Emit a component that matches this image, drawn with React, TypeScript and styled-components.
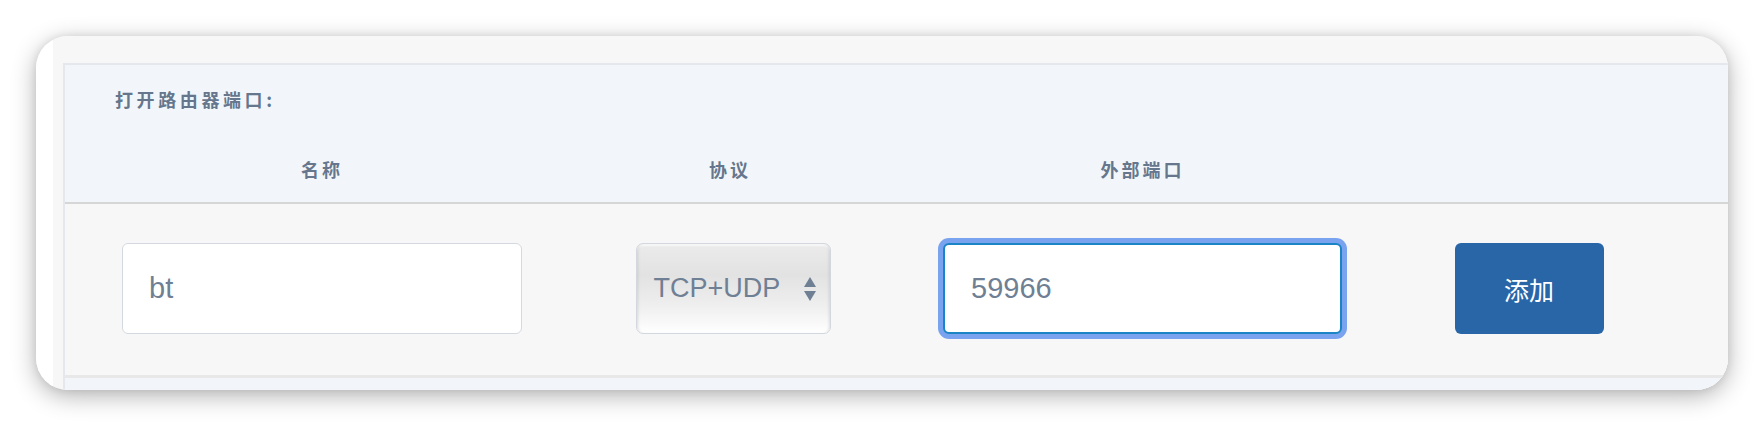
import React, { useState } from 'react';
import styled, { createGlobalStyle } from 'styled-components';

const GlobalStyle = createGlobalStyle`
  html, body {
    margin: 0;
    padding: 0;
    background: #ffffff;
  }
  body {
    font-family: "Liberation Sans", "Noto Sans CJK SC", Arial, sans-serif;
  }
`;

const Page = styled.div`
  width: 1764px;
  height: 426px;
  padding: 36px 36px 0 36px;
  box-sizing: border-box;
  overflow: hidden;
`;

const Card = styled.div`
  width: 1692px;
  height: 354px;
  border-radius: 32px;
  overflow: hidden;
  display: flex;
  background: #f7f7f7;
  box-shadow: 0 6px 24px rgba(0, 0, 0, 0.3), 0 0 8px rgba(0, 0, 0, 0.08);
`;

const SideStrip = styled.div`
  width: 17px;
  flex: none;
  background: #ffffff;
`;

const Content = styled.div`
  flex: 1;
  padding: 27px 0 0 10px;
  background: #f7f7f7;
  display: flex;
  flex-direction: column;
`;

const Panel = styled.div`
  flex: 1;
  background: #f2f6fa;
  border-top: 2px solid #e4e8ec;
  border-left: 2px solid #e4e8ec;
  display: flex;
  flex-direction: column;
`;

const Title = styled.div`
  padding: 22px 0 24px 50px;
  line-height: 24px;
  font-size: 18px;
  font-weight: 700;
  letter-spacing: 3.6px;
  color: #66768c;
  font-family: "Noto Sans CJK SC", "Liberation Sans", sans-serif;
`;

const Grid = styled.div`
  display: grid;
  grid-template-columns: 514px 302px 523px 250px 1fr;
`;

const HeadRow = styled(Grid)`
  height: 67px;
  border-bottom: 2px solid #d6d6d6;
  align-items: center;
`;

const HeadCell = styled.div`
  text-align: center;
  font-size: 18px;
  font-weight: 700;
  letter-spacing: 3px;
  color: #66768c;
  font-family: "Noto Sans CJK SC", "Liberation Sans", sans-serif;
`;

const BodyRow = styled(Grid)`
  background: #f7f7f7;
  padding: 39px 0 41px;
  border-bottom: 3px solid #e8e8e8;
  align-items: center;
`;

const Cell = styled.div<{ $shift?: number }>`
  display: flex;
  justify-content: center;
  margin-left: ${p => (p.$shift ?? 0)}px;
`;

const TextInput = styled.input<{ $focused?: boolean; $w: number }>`
  width: ${p => p.$w}px;
  height: 91px;
  box-sizing: border-box;
  border-radius: 6px;
  border: ${p => (p.$focused ? '2px solid #1b84c4' : '1.5px solid #d4d9df')};
  box-shadow: ${p => (p.$focused ? '0 0 0 5px #7aa3ef' : 'none')};
  background: #ffffff;
  padding: 0 0 0 26px;
  font-family: "Liberation Sans", Arial, sans-serif;
  font-size: 29px;
  color: #6f7f94;
  outline: none;
`;

const SelectBox = styled.div`
  position: relative;
  width: 195px;
  height: 91px;
  box-sizing: border-box;
  border: 1.5px solid #d3d8de;
  border-radius: 7px;
  background: linear-gradient(to bottom, #ebebeb 0%, #e2e2e2 35%, #efefef 70%, #ffffff 100%);
  box-shadow: inset 3px 0 3px -2px rgba(0, 0, 0, 0.12), inset -3px 0 3px -2px rgba(0, 0, 0, 0.12),
    inset 0 2px 2px rgba(255, 255, 255, 0.7);
  display: flex;
  align-items: center;
  padding: 0 0 0 17px;
  font-family: "Liberation Sans", Arial, sans-serif;
  font-size: 27px;
  color: #6f7f94;
`;

const Arrows = styled.svg`
  position: absolute;
  right: 13px;
  top: 50%;
  margin-top: -13px;
`;

const AddButton = styled.button`
  width: 149px;
  height: 91px;
  border: none;
  border-radius: 6px;
  background: #2966a8;
  color: #ffffff;
  font-size: 25px;
  font-family: "Noto Sans CJK SC", "Liberation Sans", sans-serif;
  cursor: pointer;
`;

const BottomStrip = styled.div`
  flex: 1;
  background: #f2f6fa;
`;

export default function App() {
  const [name, setName] = useState('bt');
  const [port, setPort] = useState('59966');

  return (
    <>
      <GlobalStyle />
      <Page>
        <Card>
          <SideStrip />
          <Content>
            <Panel>
              <Title>打开路由器端口:</Title>
              <HeadRow>
                <HeadCell>名称</HeadCell>
                <HeadCell>协议</HeadCell>
                <HeadCell>外部端口</HeadCell>
                <div />
                <div />
              </HeadRow>
              <BodyRow>
                <Cell>
                  <TextInput $w={400} value={name} onChange={e => setName(e.target.value)} />
                </Cell>
                <Cell $shift={6}>
                  <SelectBox>
                    TCP+UDP
                    <Arrows width="14" height="26" viewBox="0 0 14 26">
                      <path d="M7 1 L13 11 L1 11 Z" fill="#6f7f94" />
                      <path d="M1 15 L13 15 L7 25 Z" fill="#6f7f94" />
                    </Arrows>
                  </SelectBox>
                </Cell>
                <Cell>
                  <TextInput $w={399} $focused value={port} onChange={e => setPort(e.target.value)} />
                </Cell>
                <Cell>
                  <AddButton>添加</AddButton>
                </Cell>
                <div />
              </BodyRow>
              <BottomStrip />
            </Panel>
          </Content>
        </Card>
      </Page>
    </>
  );
}
